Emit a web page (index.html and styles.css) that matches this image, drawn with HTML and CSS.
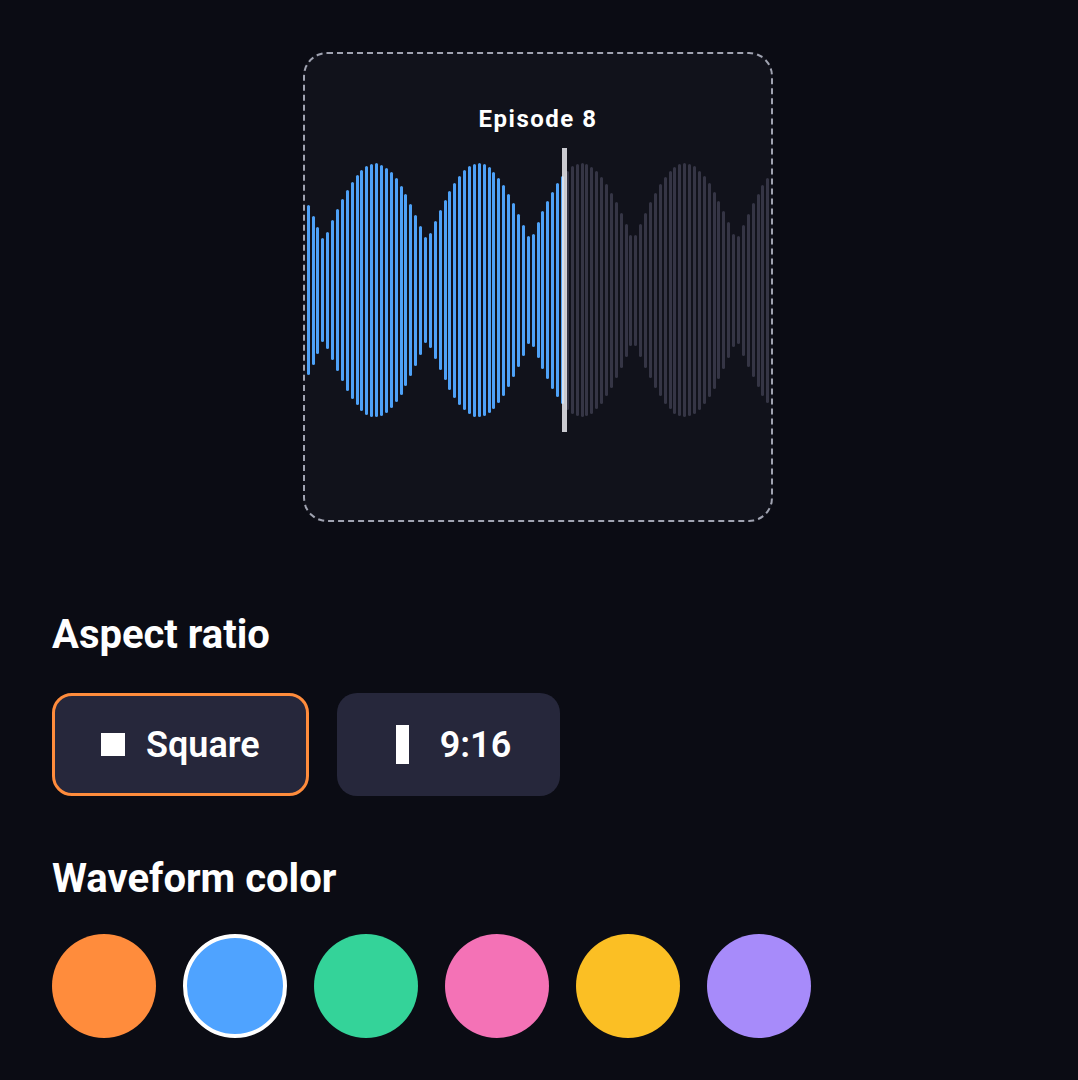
FILE: index.html
```html
<!DOCTYPE html>
<html lang="en">
<head>
    <meta charset="UTF-8">
    <meta name="viewport" content="width=device-width, initial-scale=1.0">
    <title>Audiogram - Episode 8</title>
    <link rel="stylesheet" href="styles.css">
</head>
<body>
    <main class="editor">
        <section class="preview">
            <div class="episode-title">Episode 8</div>
            <div class="wave" id="wave">
                <div class="playhead"></div>
            </div>
        </section>

        <h2 class="section-title section-title-ratio">Aspect ratio</h2>
        <div class="ratio-options">
            <button class="ratio-btn active">
                <span class="ratio-icon ratio-icon-square"></span>
                Square
            </button>
            <button class="ratio-btn">
                <span class="ratio-icon ratio-icon-tall"></span>
                9:16
            </button>
        </div>

        <h2 class="section-title section-title-color">Waveform color</h2>
        <div class="swatches">
            <button class="swatch swatch-orange"></button>
            <button class="swatch swatch-blue selected"></button>
            <button class="swatch swatch-green"></button>
            <button class="swatch swatch-pink"></button>
            <button class="swatch swatch-yellow"></button>
            <button class="swatch swatch-purple"></button>
        </div>
    </main>

    <script>
        const BAR_COUNT = 95;
        const PLAYED = 53;
        const MAX_HALF = 127;

        const wave = document.getElementById('wave');

        for (let i = 0; i < BAR_COUNT; i++) {
            // two beating lobes, never quieter than ~40%
            const lobe = Math.abs(Math.cos(Math.PI * (i - 13.75) / 21.1));
            const half = MAX_HALF * (0.39 + 0.61 * lobe);

            const bar = document.createElement('div');
            bar.className = i < PLAYED ? 'bar played' : 'bar';
            bar.style.height = Math.round(half * 2) + 'px';
            wave.appendChild(bar);
        }
    </script>
</body>
</html>
```

FILE: styles.css
```css
:root {
    --page-bg: #0b0c14;
    --card-bg: #11121b;
    --button-bg: #26273b;
    --dash: #a0a3b1;
    --accent-orange: #ff8c3c;
    --wave-blue: #4ea1f7;
    --wave-idle: #353545;
    --text: #ffffff;
}

body {
    margin: 0;
    padding: 0;
    background: var(--page-bg);
    color: var(--text);
    font-family: 'Roboto', 'Noto Sans', sans-serif;
}

.editor {
    padding: 52px 52px 40px;
}

/* Preview card */
.preview {
    box-sizing: border-box;
    width: 470px;
    height: 470px;
    margin: 0 auto;
    padding-top: 51px;
    border: 2px dashed var(--dash);
    border-radius: 24px;
    background: var(--card-bg);
    display: flex;
    flex-direction: column;
    align-items: center;
    overflow: hidden;
    position: relative;
    left: -1px;
}

.episode-title {
    font-size: 24px;
    line-height: 28px;
    font-weight: 700;
    letter-spacing: 1.5px;
}

.wave {
    position: relative;
    align-self: stretch;
    height: 284px;
    margin-top: 15px;
    display: flex;
    align-items: center;
    justify-content: center;
    gap: 1.9px;
}

.bar {
    flex: 0 0 3px;
    border-radius: 2px;
    background: var(--wave-idle);
}

.bar.played {
    background: var(--wave-blue);
}

.playhead {
    position: absolute;
    top: 0;
    bottom: 0;
    left: 257px;
    width: 5px;
    background: rgba(235, 235, 240, 0.85);
    z-index: 1;
}

/* Settings */
.section-title {
    margin: 0;
    font-size: 40px;
    line-height: 48px;
    font-weight: 700;
}

.section-title-ratio {
    margin-top: 89px;
}

.section-title-color {
    margin-top: 59px;
}

.ratio-options {
    display: flex;
    gap: 28px;
    margin-top: 34px;
}

.ratio-btn {
    box-sizing: border-box;
    height: 103px;
    padding: 0 46px;
    display: flex;
    align-items: center;
    gap: 21px;
    border: 3px solid transparent;
    border-radius: 20px;
    background: var(--button-bg);
    color: var(--text);
    font-family: inherit;
    font-size: 36px;
    font-weight: 600;
    cursor: pointer;
}

.ratio-btn.active {
    border-color: var(--accent-orange);
}

.ratio-icon {
    display: block;
    background: var(--text);
}

.ratio-icon-square {
    width: 24px;
    height: 23px;
}

.ratio-icon-tall {
    width: 13px;
    height: 39px;
    margin: 0 10px;
}

.swatches {
    display: flex;
    gap: 27px;
    margin-top: 31px;
}

.swatch {
    box-sizing: border-box;
    width: 104px;
    height: 104px;
    padding: 0;
    border: none;
    border-radius: 50%;
    cursor: pointer;
}

.swatch.selected {
    border: 4px solid #ffffff;
}

.swatch-orange { background: #ff8c3c; }
.swatch-blue { background: #4fa3ff; }
.swatch-green { background: #34d399; }
.swatch-pink { background: #f472b6; }
.swatch-yellow { background: #fbbf24; }
.swatch-purple { background: #a78bfa; }
```
